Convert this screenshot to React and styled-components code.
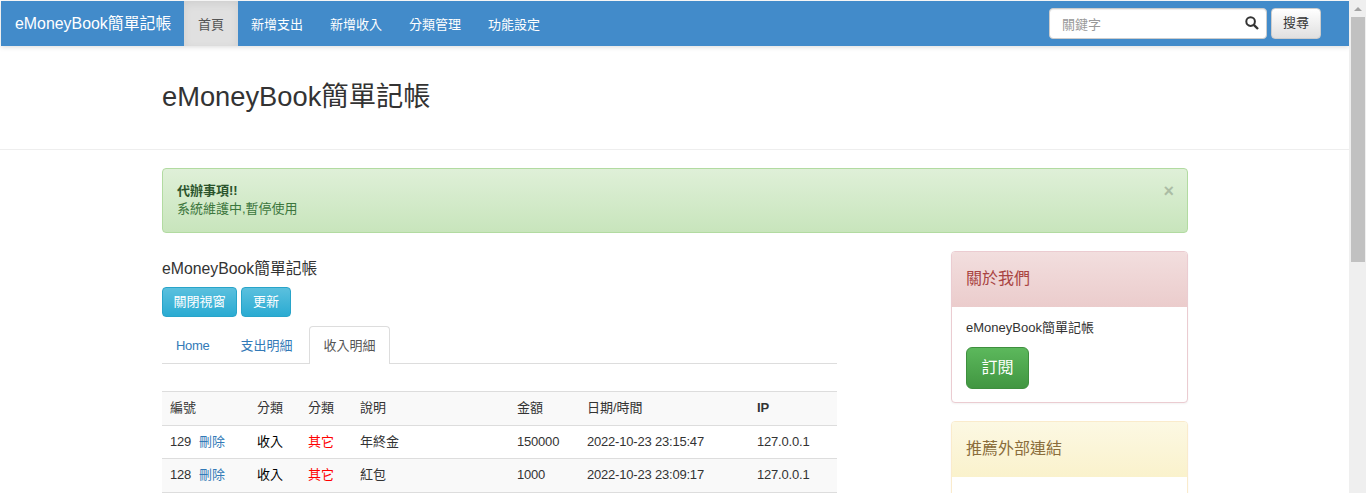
import React from "react";
import styled, { createGlobalStyle } from "styled-components";

const Global = createGlobalStyle`
  html, body { margin: 0; padding: 0; height: 493px; overflow: hidden; background: #fff; }
  * { box-sizing: border-box; }
  body { font-family: "Liberation Sans", "Noto Sans CJK TC", sans-serif; font-size: 13px; color: #333; line-height: 1.42857; }
`;

const Shell = styled.div`display: flex; height: 493px; overflow: hidden;`;
const Page = styled.div`flex: 1; min-width: 0; padding-top: 1px; overflow: hidden;`;

const Scrollbar = styled.div`
  width: 17px; flex: none; background: #efefef; display: flex; flex-direction: column;
`;
const ScrollUp = styled.div`
  height: 17px; width: 100%; display: flex; align-items: center; justify-content: center; padding-left: 1px;
  &::before { content: ""; border-left: 4px solid transparent; border-right: 4px solid transparent; border-bottom: 4px solid #a3a3a3; }
`;
const ScrollThumb = styled.div`width: 14px; height: 245px; margin-left: 2px; background: #c1c1c1;`;

const Navbar = styled.nav`
  height: 45px; margin-left: 1px; display: flex; align-items: stretch; background: #428bca;
  box-shadow: 0 1px 5px rgba(0,0,0,.15); position: relative;
`;
const Brand = styled.a`
  width: 183px; font-size: 15.9px; color: #fff; padding-left: 14px; line-height: 45px; white-space: nowrap;
`;
const NavItem = styled.a`
  font-size: 13px; padding: 0 13.5px 0 14px; line-height: 47px; white-space: nowrap;
  color: ${p => (p.$active ? "#555" : "#fff")};
  background: ${p => (p.$active ? "#e0e0e0" : "transparent")};
  box-shadow: ${p => (p.$active ? "inset 0 3px 9px rgba(0,0,0,.08)" : "none")};
  margin-right: -.5px;
`;
const SearchForm = styled.form`
  margin-left: auto; margin-right: 28px; display: flex; align-items: center; gap: 4px;
`;
const SearchBox = styled.div`
  width: 218px; height: 31px; background: #fff; border: 1px solid #ccc; border-radius: 4px;
  display: flex; align-items: center; padding: 0 7px 0 12px; box-shadow: inset 0 1px 1px rgba(0,0,0,.075);
  svg { margin-bottom: 2px; }
`;
const SearchText = styled.span`flex: 1; color: #999; font-size: 13px; padding-top: 3px;`;
const SearchButton = styled.button`
  width: 50px; height: 31px; padding: 0; font: inherit; color: #333; border: 1px solid #ccc; border-radius: 4px;
  background: linear-gradient(#fff, #e0e0e0);
`;

const PageHeader = styled.header`
  height: 104px; border-bottom: 1px solid #eee; padding: 29px 0 0 162px;
`;
const Title = styled.h1`margin: 0; font-size: 27.3px; font-weight: 400; line-height: 44px; color: #333;`;

const Container = styled.div`padding: 18px 161px 0 162px;`;
const Alert = styled.div`
  position: relative; height: 65px; padding: 13px 14px; border: 1px solid #b2dba1; border-radius: 4px;
  background: linear-gradient(#dff0d8, #c8e5bc); color: #3c763d; font-size: 13px; line-height: 18px;
  strong { display: block; color: #2b542c; }
`;
const Close = styled.span`
  position: absolute; top: 13px; right: 13px; font-size: 18px; line-height: 18px; font-weight: 700; color: #000; opacity: .2;
`;

const Columns = styled.div`display: flex; justify-content: space-between; align-items: flex-start; margin-top: 18px;`;
const Main = styled.main`width: 675px;`;
const Side = styled.aside`width: 237px; display: flex; flex-direction: column; gap: 18px;`;

const Heading = styled.h4`margin: 0; font-size: 15.8px; font-weight: 400; line-height: 20px; padding: 8px 0 0; height: 27px;`;
const Buttons = styled.div`display: flex; gap: 4px; margin-top: 9px;`;
const InfoButton = styled.button`
  height: 30px; padding: 0 ${p => p.$pad}px; font: inherit; font-size: 13px; color: #fff; border: 1px solid #28a4c9; border-radius: 4px;
  background: linear-gradient(#5bc0de, #2aabd2);
`;
const Tabs = styled.ul`
  list-style: none; margin: 9px 0 0; padding: 0; display: flex; height: 38px; border-bottom: 1px solid #ddd;
`;
const Tab = styled.li`
  margin-right: 1px; height: 38px; padding: 0 14px; line-height: 37px; font-size: 13px; border: 1px solid transparent; border-bottom: 0;
  border-radius: 4px 4px 0 0;
  color: ${p => (p.$active ? "#555" : "#337ab7")};
  ${p => p.$active && "background:#fff;border-color:#ddd;padding-right:13px;"}
  ${p => p.$first && "padding-left:13px;letter-spacing:-.3px;"}
`;

const Table = styled.table`
  width: 675px; margin-top: 27px; border-collapse: collapse; table-layout: fixed; font-size: 13px;
  border-top: 1px solid #ddd;
`;
const Th = styled.th`
  height: 34px; padding: 0 8px; text-align: left; font-weight: ${p => (p.$bold ? 700 : 400)}; background: #f9f9f9; color: #333; border-bottom: 1px solid #ddd;
`;
const Tr = styled.tr`background: ${p => (p.$striped ? "#f9f9f9" : "#fff")};`;
const Td = styled.td`
  height: ${p => p.$h}px; padding: 0 8px; border-bottom: 1px solid #ddd; color: ${p => p.$color || "#333"}; white-space: nowrap;
  letter-spacing: ${p => (p.$num ? "-.2px" : "0")};
`;
const DeleteLink = styled.a`color: #337ab7; margin-left: 8px; letter-spacing: 0;`;

const Panel = styled.section`
  border: 1px solid ${p => p.$border}; border-radius: 4px; background: #fff; box-shadow: 0 1px 2px rgba(0,0,0,.05); overflow: hidden;
`;
const PanelHead = styled.div`
  height: 55px; padding: 0 14px; line-height: 54px; font-size: 16px; color: ${p => p.$color};
  background: linear-gradient(${p => p.$from}, ${p => p.$to});
`;
const PanelBody = styled.div`padding: 12px 14px 13px; min-height: ${p => p.$min || 0}px;`;
const PanelText = styled.p`margin: 0 0 10px; font-size: 13px; line-height: 18px; color: #333;`;
const SubscribeButton = styled.button`
  width: 63px; height: 42px; padding: 0; font: inherit; font-size: 16px; color: #fff; border: 1px solid #3e8f3e; border-radius: 6px;
  background: linear-gradient(#5cb85c, #419641); display: block;
`;

const rows = [
  ["129", "年終金", "150000", "2022-10-23 23:15:47", false, 33],
  ["128", "紅包", "1000", "2022-10-23 23:09:17", true, 34],
];

const SearchIcon = () => (
  <svg width="14" height="14" viewBox="0 0 14 14" fill="none" stroke="#333" strokeWidth="2">
    <circle cx="5.6" cy="5.6" r="4.3" />
    <path d="M8.8 8.8 L13 13" strokeWidth="2.4" />
  </svg>
);

export default function App() {
  return (
    <Shell>
      <Global />
      <Page>
        <Navbar>
          <Brand>eMoneyBook簡單記帳</Brand>
          <NavItem $active>首頁</NavItem>
          <NavItem>新增支出</NavItem>
          <NavItem>新增收入</NavItem>
          <NavItem>分類管理</NavItem>
          <NavItem>功能設定</NavItem>
          <SearchForm>
            <SearchBox>
              <SearchText>關鍵字</SearchText>
              <SearchIcon />
            </SearchBox>
            <SearchButton type="button">搜尋</SearchButton>
          </SearchForm>
        </Navbar>
        <PageHeader>
          <Title>eMoneyBook簡單記帳</Title>
        </PageHeader>
        <Container>
          <Alert>
            <strong>代辦事項!!</strong>
            系統維護中,暫停使用
            <Close>×</Close>
          </Alert>
          <Columns>
            <Main>
              <Heading>eMoneyBook簡單記帳</Heading>
              <Buttons>
                <InfoButton $pad={10.5}>關閉視窗</InfoButton>
                <InfoButton $pad={11}>更新</InfoButton>
              </Buttons>
              <Tabs>
                <Tab $first>Home</Tab>
                <Tab>支出明細</Tab>
                <Tab $active>收入明細</Tab>
              </Tabs>
              <Table>
                <colgroup>
                  <col width="87" /><col width="51" /><col width="52" /><col width="157" /><col width="70" /><col width="170" /><col width="88" />
                </colgroup>
                <thead>
                  <tr>
                    <Th>編號</Th><Th>分類</Th><Th>分類</Th><Th>說明</Th><Th>金額</Th><Th>日期/時間</Th><Th $bold>IP</Th>
                  </tr>
                </thead>
                <tbody>
                  {rows.map(([id, desc, amount, date, striped, h]) => (
                    <Tr key={id} $striped={striped}>
                      <Td $h={h} $num>{id}<DeleteLink>刪除</DeleteLink></Td>
                      <Td $h={h} $color="#000">收入</Td>
                      <Td $h={h} $color="#f00">其它</Td>
                      <Td $h={h}>{desc}</Td>
                      <Td $h={h} $num>{amount}</Td>
                      <Td $h={h} $num>{date}</Td>
                      <Td $h={h} $num>127.0.0.1</Td>
                    </Tr>
                  ))}
                </tbody>
              </Table>
            </Main>
            <Side>
              <Panel $border="#ebccd1">
                <PanelHead $color="#a94442" $from="#f2dede" $to="#ebcccc">關於我們</PanelHead>
                <PanelBody>
                  <PanelText>eMoneyBook簡單記帳</PanelText>
                  <SubscribeButton type="button">訂閱</SubscribeButton>
                </PanelBody>
              </Panel>
              <Panel $border="#faebcc">
                <PanelHead $color="#8a6d3b" $from="#fcf8e3" $to="#faf2cc">推薦外部連結</PanelHead>
                <PanelBody $min={100} />
              </Panel>
            </Side>
          </Columns>
        </Container>
      </Page>
      <Scrollbar>
        <ScrollUp />
        <ScrollThumb />
      </Scrollbar>
    </Shell>
  );
}
